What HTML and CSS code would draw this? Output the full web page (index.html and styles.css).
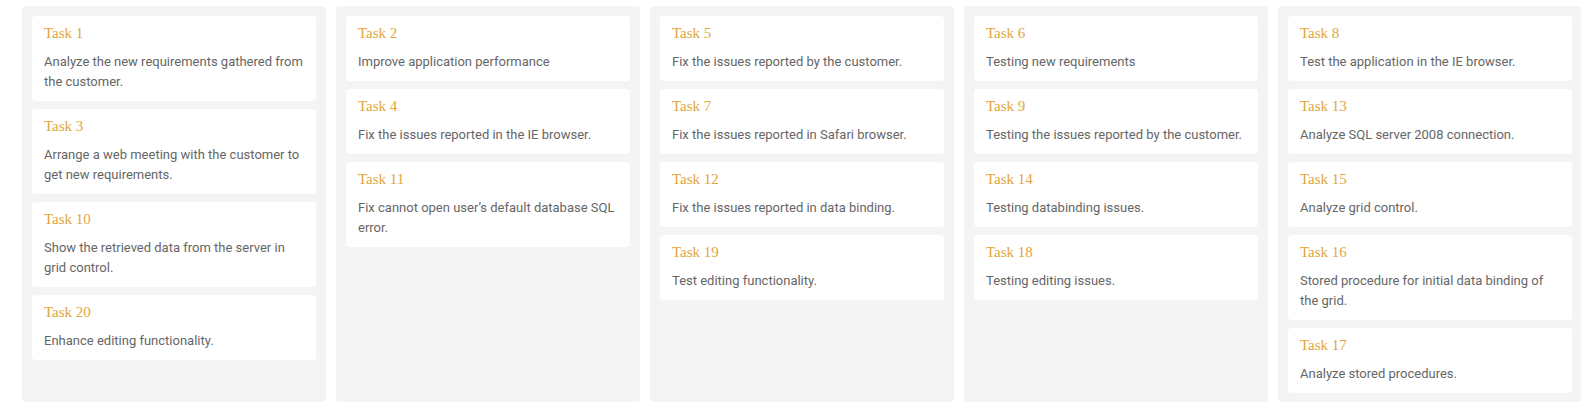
FILE: index.html
```html
<!DOCTYPE html>
<html>
<head>
<meta charset="utf-8">
<link rel="stylesheet" href="styles.css">
</head>
<body>
<div class="board">
  <div class="column">
    <div class="card"><div class="title">Task 1</div><div class="desc">Analyze the new requirements gathered from the customer.</div></div>
    <div class="card"><div class="title">Task 3</div><div class="desc">Arrange a web meeting with the customer to get new requirements.</div></div>
    <div class="card"><div class="title">Task 10</div><div class="desc">Show the retrieved data from the server in grid control.</div></div>
    <div class="card"><div class="title">Task 20</div><div class="desc">Enhance editing functionality.</div></div>
  </div>
  <div class="column">
    <div class="card"><div class="title">Task 2</div><div class="desc">Improve application performance</div></div>
    <div class="card"><div class="title">Task 4</div><div class="desc">Fix the issues reported in the IE browser.</div></div>
    <div class="card"><div class="title">Task 11</div><div class="desc">Fix cannot open user’s default database SQL error.</div></div>
  </div>
  <div class="column">
    <div class="card"><div class="title">Task 5</div><div class="desc">Fix the issues reported by the customer.</div></div>
    <div class="card"><div class="title">Task 7</div><div class="desc">Fix the issues reported in Safari browser.</div></div>
    <div class="card"><div class="title">Task 12</div><div class="desc">Fix the issues reported in data binding.</div></div>
    <div class="card"><div class="title">Task 19</div><div class="desc">Test editing functionality.</div></div>
  </div>
  <div class="column">
    <div class="card"><div class="title">Task 6</div><div class="desc">Testing new requirements</div></div>
    <div class="card"><div class="title">Task 9</div><div class="desc">Testing the issues reported by the customer.</div></div>
    <div class="card"><div class="title">Task 14</div><div class="desc">Testing databinding issues.</div></div>
    <div class="card"><div class="title">Task 18</div><div class="desc">Testing editing issues.</div></div>
  </div>
  <div class="column">
    <div class="card"><div class="title">Task 8</div><div class="desc">Test the application in the IE browser.</div></div>
    <div class="card"><div class="title">Task 13</div><div class="desc">Analyze SQL server 2008 connection.</div></div>
    <div class="card"><div class="title">Task 15</div><div class="desc">Analyze grid control.</div></div>
    <div class="card"><div class="title">Task 16</div><div class="desc">Stored procedure for initial data binding of the grid.</div></div>
    <div class="card"><div class="title">Task 17</div><div class="desc">Analyze stored procedures.</div></div>
  </div>
</div>
</body>
</html>
```
FILE: styles.css
```css
html, body {
  margin: 0;
  padding: 0;
  background: #ffffff;
  overflow: hidden;
}
.board {
  display: flex;
  gap: 10px;
  padding: 6px 0 0 22px;
  align-items: stretch;
}
.column {
  flex: 0 0 304px;
  box-sizing: border-box;
  width: 304px;
  background: #f4f4f4;
  border-radius: 4px;
  padding: 10px 10px 9px;
  display: flex;
  flex-direction: column;
  gap: 8px;
}
.card {
  background: #ffffff;
  border-radius: 4px;
  padding: 7px 12px 9px;
}
.title {
  font-family: "Liberation Serif", "Times New Roman", serif;
  font-size: 15px;
  line-height: 20px;
  color: #dfa63e;
  margin-bottom: 9px;
}
.desc {
  font-family: Roboto, "Liberation Sans", sans-serif;
  font-size: 13px;
  line-height: 20px;
  color: #666666;
}
```
